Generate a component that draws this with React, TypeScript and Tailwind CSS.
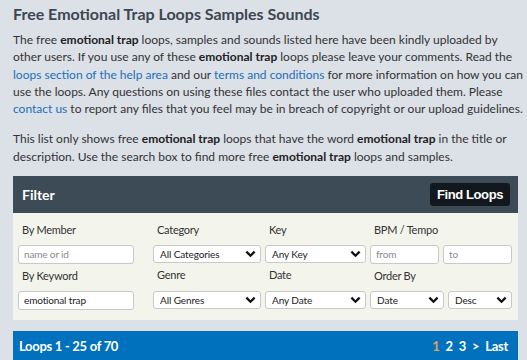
const Chevron = () => (
  <svg width="11" height="8" viewBox="0 0 11 8" className="shrink-0">
    <path d="M1.4 1.6 L5.5 5.7 L9.6 1.6" fill="none" stroke="#111" strokeWidth="2.3" />
  </svg>
);

const Select = ({ value, className }: { value: string; className: string }) => (
  <div
    className={`flex items-center justify-between h-[18px] bg-white border border-[#c9c9c9] rounded-[3px] pl-[6px] pr-[4px] text-[10px] tracking-[-0.1px] text-[#222] ${className}`}
  >
    <span>{value}</span>
    <Chevron />
  </div>
);

const Input = ({ value, placeholder, className }: { value?: string; placeholder?: string; className: string }) => (
  <div
    className={`flex items-center h-[19px] bg-white border border-[#c9c9c9] rounded-[3px] px-[5px] text-[10px] tracking-[-0.15px] ${className}`}
  >
    {value ? <span className="text-[#222]">{value}</span> : <span className="text-[#8a8a8a]">{placeholder}</span>}
  </div>
);

const Label = ({ text, className = "" }: { text: string; className?: string }) => (
  <span className={`pl-[4px] h-[16px] leading-[16px] whitespace-nowrap ${className}`}>{text}</span>
);

export default function App() {
  const b = "font-bold text-[#222]";
  const link = "text-[#1a70b8]";
  return (
    <div className="w-[527px] h-[360px] overflow-hidden bg-[#dce0e7] pl-[13px] font-['Lato',sans-serif] text-[#333]">
      <h1 className="pt-[3px] text-[16px] leading-[22px] font-bold text-[#3c4751]">
        Free Emotional Trap Loops Samples Sounds
      </h1>
      <p className="mt-[6px] text-[12px] leading-[17.3px] whitespace-nowrap">
        The free <span className={b}>emotional trap</span> loops, samples and sounds listed here have been kindly uploaded by
        <br />
        other users. If you use any of these <span className={b}>emotional trap</span> loops please leave your comments. Read the
        <br />
        <a className={link}>loops section of the help area</a> and our <a className={link}>terms and conditions</a> for more
        information on how you can
        <br />
        use the loops. Any questions on using these files contact the user who uploaded them. Please
        <br />
        <a className={link}>contact us</a> to report any files that you feel may be in breach of copyright or our upload guidelines.
      </p>
      <p className="mt-[13px] text-[12px] leading-[17.3px] whitespace-nowrap">
        This list only shows free <span className={b}>emotional trap</span> loops that have the word{" "}
        <span className={b}>emotional trap</span> in the title or
        <br />
        description. Use the search box to find more free <span className={b}>emotional trap</span> loops and samples.
      </p>

      <div className="mt-[11px] w-[505px]">
        <div className="h-[37px] bg-[#3d4b56] flex items-center justify-between pl-[9px] pr-[8px]">
          <span className="text-white font-bold text-[14px]">Filter</span>
          <button className="h-[23px] w-[80px] rounded-[3px] bg-[#12181d] text-white font-bold text-[13px] tracking-[-0.4px] font-['Liberation_Sans',sans-serif]">
            Find Loops
          </button>
        </div>
        <div className="bg-[#f3f5ed] h-[107px] pl-[5px] pt-[9px] text-[11px] tracking-[-0.25px] text-[#333] flex">
          <div className="flex flex-col w-[116px]">
            <Label text="By Member" />
            <Input placeholder="name or id" className="mt-[7px]" />
            <Label text="By Keyword" className="mt-[4px]" />
            <Input value="emotional trap" className="mt-[7px]" />
          </div>
          <div className="flex flex-col w-[108px] ml-[19px]">
            <Label text="Category" />
            <Select value="All Categories" className="mt-[7px]" />
            <Label text="Genre" className="mt-[4px]" />
            <Select value="All Genres" className="mt-[8px]" />
          </div>
          <div className="flex flex-col w-[101px] ml-[4px]">
            <Label text="Key" />
            <Select value="Any Key" className="mt-[7px]" />
            <Label text="Date" className="mt-[4px]" />
            <Select value="Any Date" className="mt-[8px]" />
          </div>
          <div className="flex flex-col w-[142px] ml-[4px]">
            <Label text="BPM / Tempo" />
            <div className="mt-[7px] flex gap-[4px]">
              <Input placeholder="from" className="w-[69px]" />
              <Input placeholder="to" className="w-[69px]" />
            </div>
            <Label text="Order By" className="mt-[4px]" />
            <div className="mt-[7px] flex gap-[4px]">
              <Select value="Date" className="w-[74px]" />
              <Select value="Desc" className="w-[64px]" />
            </div>
          </div>
        </div>
        <div className="mt-[11px] h-[40px] bg-[#0071bc] flex items-start justify-between pl-[6px] pr-[10px] pt-[6px] text-white font-bold text-[13px] tracking-[-0.3px]">
          <span>Loops 1 - 25 of 70</span>
          <div className="flex gap-[6px]">
            <span className="text-[#e0a060]">1</span>
            <span>2</span>
            <span>3</span>
            <span>&gt;</span>
            <span>Last</span>
          </div>
        </div>
      </div>
    </div>
  );
}
